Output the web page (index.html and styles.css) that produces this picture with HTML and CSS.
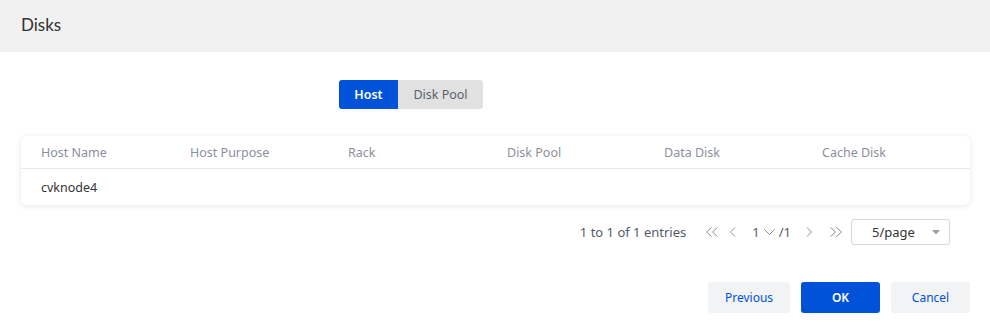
FILE: index.html
```html
<!DOCTYPE html>
<html lang="en">
<head>
  <meta charset="UTF-8">
  <title>Disks</title>
  <link rel="stylesheet" href="styles.css">
</head>
<body>
  <div class="header">Disks</div>
  <div class="content">
    <div class="tabs">
      <button class="tab active">Host</button>
      <button class="tab">Disk Pool</button>
    </div>

    <div class="table-card">
      <div class="row head">
        <span>Host Name</span>
        <span>Host Purpose</span>
        <span>Rack</span>
        <span>Disk Pool</span>
        <span>Data Disk</span>
        <span>Cache Disk</span>
      </div>
      <div class="row">
        <span>cvknode4</span>
        <span></span>
        <span></span>
        <span></span>
        <span></span>
        <span></span>
      </div>
    </div>

    <div class="pager">
      <span class="total">1 to 1 of 1 entries</span>
      <span class="nav first">
        <svg width="14" height="12" viewBox="0 0 14 12"><path d="M6.5 1.5L1.5 6L6.5 10.5M12.5 1.5L7.5 6L12.5 10.5" fill="none" stroke="#8a8f99" stroke-width="1"/></svg>
      </span>
      <span class="nav prev">
        <svg width="7" height="12" viewBox="0 0 7 12"><path d="M6 1.5L1.5 6L6 10.5" fill="none" stroke="#8a8f99" stroke-width="1"/></svg>
      </span>
      <span class="current">1
        <svg width="11" height="8" viewBox="0 0 11 8"><path d="M0.5 1.5L5.5 6.5L10.5 1.5" fill="none" stroke="#8a8f99" stroke-width="1"/></svg>
        /1</span>
      <span class="nav next">
        <svg width="7" height="12" viewBox="0 0 7 12"><path d="M1 1.5L5.5 6L1 10.5" fill="none" stroke="#8a8f99" stroke-width="1"/></svg>
      </span>
      <span class="nav last">
        <svg width="14" height="12" viewBox="0 0 14 12"><path d="M1.5 1.5L6.5 6L1.5 10.5M7.5 1.5L12.5 6L7.5 10.5" fill="none" stroke="#8a8f99" stroke-width="1"/></svg>
      </span>
      <div class="page-size">
        <span>5/page</span>
        <svg width="8" height="5" viewBox="0 0 8 5"><path d="M0 0H8L4 4.5Z" fill="#9a9ea8"/></svg>
      </div>
    </div>

    <div class="footer">
      <button class="btn light">Previous</button>
      <button class="btn primary">OK</button>
      <button class="btn light">Cancel</button>
    </div>
  </div>
</body>
</html>
```

FILE: styles.css
```css
body {
  margin: 0;
  background: #fff;
  font-family: "Noto Sans", "Open Sans", sans-serif;
  font-size: 13px;
  color: #333;
}

.header {
  height: 52px;
  line-height: 50px;
  padding-left: 21px;
  background: #f1f1f1;
  font-family: Lato, "Noto Sans", sans-serif;
  font-size: 17px;
  color: #333;
}

.content {
  padding: 0 20px 0 21px;
}

.tabs {
  display: flex;
  margin: 28px 0 0 318px;
}

.tab {
  height: 29px;
  width: 85px;
  padding: 0;
  border: none;
  background: #e1e1e1;
  color: #5a5f6b;
  font-family: inherit;
  font-size: 12.5px;
}

.tab:first-child {
  border-radius: 3px 0 0 3px;
}

.tab:last-child {
  border-radius: 0 3px 3px 0;
}

.tab.active {
  width: 59px;
  background: #0052d9;
  color: #fff;
  font-weight: 600;
}

.table-card {
  margin-top: 27px;
  border-radius: 6px;
  box-shadow: 0 1px 6px rgba(0, 0, 0, 0.1);
  background: #fff;
}

.row {
  display: grid;
  grid-template-columns: 149px 158px 159px 157px 158px 1fr;
  padding-left: 20px;
  height: 36px;
  align-items: center;
  font-size: 12.5px;
  color: #333;
}

.row.head {
  height: 32px;
  color: #8b8f9c;
  border-bottom: 1px solid #e6e8ec;
}

.pager {
  display: flex;
  justify-content: flex-end;
  align-items: center;
  margin-top: 14px;
  padding-right: 20px;
  color: #555b66;
}

.total {
  margin-right: 19px;
}

.nav {
  display: flex;
  align-items: center;
}

.nav.first {
  margin-right: 10px;
}

.nav.prev {
  margin-right: 16px;
}

.nav.next {
  margin-right: 16px;
}

.nav.last {
  margin-right: 8px;
}

.current {
  display: flex;
  align-items: center;
  gap: 4px;
  margin-right: 15px;
}

.page-size {
  display: flex;
  align-items: center;
  justify-content: space-between;
  box-sizing: border-box;
  width: 99px;
  height: 26px;
  padding: 0 9px 0 20px;
  border: 1px solid #d4d6db;
  border-radius: 3px;
  color: #333;
}

.footer {
  display: flex;
  justify-content: flex-end;
  gap: 11px;
  margin-top: 37px;
}

.btn {
  height: 31px;
  width: 79px;
  border: none;
  border-radius: 3px;
  font-family: inherit;
  font-size: 12px;
}

.btn.light {
  background: #f2f3f5;
  color: #0052d9;
}

.btn.light:first-child {
  width: 82px;
}

.btn.primary {
  background: #0052d9;
  color: #fff;
  font-weight: 600;
}
```
